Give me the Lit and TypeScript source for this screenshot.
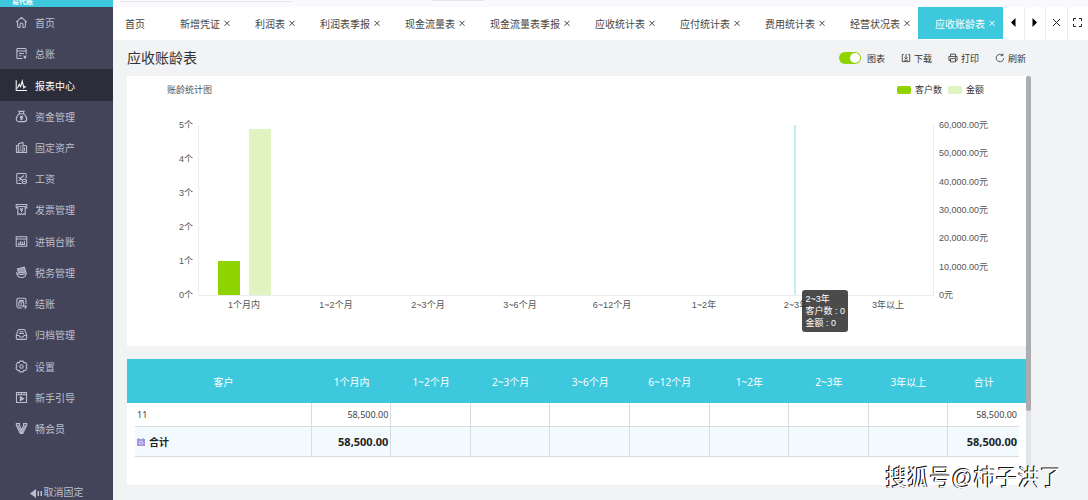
import { LitElement, html, css, svg, nothing } from "lit";
import { customElement } from "lit/decorators.js";
import { classMap } from "lit/directives/class-map.js";

const icons: Record<string, unknown> = {
  home: svg`<path d="M1.5 7.6 8 1.8l6.500 5.800M3.200 6.300v6.300c0 1 .6 1.600 1.600 1.600h1.400V10.300a1.800 1.800 0 0 1 3.600 0v3.900h1.400c1 0 1.600-.6 1.600-1.600V6.300"/>`,
  ledger: svg`<path d="M9 14.200H3.600c-.8 0-1.300-.5-1.300-1.300V3.100c0-.8.5-1.300 1.300-1.300h8.800c.8 0 1.300.5 1.300 1.300V9M2.300 5h11.400M5 8h6M5 10.700h3"/><path d="m10.500 10.500 1.700 2 1.700-2M12.200 12.500v2.300M10.700 12.800h3"/>`,
  report: svg`<path d="M1.500 1.500v12.700h13.200M3 11.500l2.200-5 1.700 3 2-7 2 8.500 1.300-2 1 1.300"/>`,
  money: svg`<path d="M5.800 4.300 4.800 1.700h6.400l-1 2.600M5.600 4.500h4.800c2.600 1.800 4 4 4 6.500 0 2.200-1.200 3.300-3.200 3.300H4.800c-2 0-3.200-1.100-3.200-3.300 0-2.500 1.400-4.700 4-6.500z"/><path d="m6.200 7 1.800 2 1.800-2M8 9v3.500M6 9.300h4M6 11h4"/>`,
  asset: svg`<path d="M4.500 14V3.300L9.800 1.700V14M4.500 4.800l-2.800 1V14h12.600V6.300L9.800 5M6.300 6.200h1.700M6.300 8.700h1.700M6.300 11.200h1.700M11.700 8.200v3.800M3 8.500h.5M3 11h.5"/>`,
  salary: svg`<path d="M8 14.200H3.500c-.8 0-1.300-.5-1.300-1.300V3.100c0-.8.5-1.300 1.300-1.300h9c.8 0 1.300.5 1.300 1.300v5M4.500 6.500l2 1.500L11 4.300M4.500 10.500l3-1.500 1.500.7"/><circle cx="11.500" cy="11.700" r="2.700"/><path d="M10.300 11.700h2.400"/>`,
  invoice: svg`<path d="M3.500 6H1.500V1.900h13V6h-2M3.500 4.300h9v9.900l-1.600-1.200-1.400 1.200L8 13l-1.500 1.200L5.100 13l-1.600 1.200z"/><path d="m6.200 6.300 1.800 2 1.800-2M8 8.300v3M6.300 8.700h3.400"/>`,
  stock: svg`<path d="M1.500 2.200h13v11.600h-13zM1.500 4.900h13M4.700 11.600V9M7 11.600V7.300M9.200 11.600V8.500M11.500 11.600V7M3.500 11.700h9"/>`,
  tax: svg`<path d="M2 8.600c.6 3.600 2.800 5.600 6 5.600s5.500-2 6-5.600c-2 1.200-3.500 1.700-5 1.700H6.500C4.800 10.200 3.300 9.600 2 8.600z"/><path d="M4.200 7.800 3 3.500l8.500-2 1.700 5.700c-2 1-5 1.500-9 .6z" fill="currentColor" fill-opacity=".7"/>`,
  closing: svg`<path d="M8.500 13.500H4.300c-1.200 0-2-.7-2-2V3.500c0-1.200.8-1.900 2-1.900h7.200c1.200 0 2 .7 2 1.900V9M5 4.300h6"/><rect x="4.700" y="6" width="6" height="5" rx="1"/><path d="M7.700 7.500v2M14 12h-4.500M12 10l2 2-2 2.500"/>`,
  archive: svg`<path d="M1.600 9 3.700 3c.3-.8.700-1.100 1.500-1.100h5.600c.8 0 1.200.3 1.500 1.100l2.100 6v3.500c0 1-.5 1.500-1.500 1.500H3.100c-1 0-1.500-.5-1.500-1.500zM1.600 9.200h3.300l1.200 1.900h3.800l1.200-1.900h3.300M5.500 4.600h5M4.900 6.800h6.200"/>`,
  gear: svg`<path d="M5.300 3.200 6.100 1.400h3.800l.8 1.800 2.200-.2 1.900 3.200L13.500 8l1.300 1.800-1.900 3.200-2.200-.2-.8 1.800H6.100l-.8-1.800-2.200.2-1.900-3.200L2.500 8 1.200 6.200 3.100 3z"/><circle cx="8" cy="8" r="2.100"/>`,
  guide: svg`<path d="M1.800 1.900h12.400v12.200H1.800zM1.800 4.700h12.400M4.800 1.900v2.800M8 1.900v2.800M11.200 1.900v2.800"/><path d="M6.600 7v4.800l4-2.400z" fill="currentColor"/>`,
  member: svg`<path d="M1.600 2h4v2.200l2.500 6 2.400-6V2h4v2L9.600 14H6.400L1.600 4zM3.200 3.800l4.500 9.500M12.900 3.800 8.300 13.300"/>`,
  download: svg`<path d="M4.500 2.500H2v11.300h12V2.500h-2.500M8 1.500v7.800M5.500 7 8 9.500 10.500 7M5 11.600h6"/>`,
  print: svg`<path d="M4 5.500V1.800h8v3.700M4 11.800H1.500V5.500h13v6.300H12M4 9h8v5.200H4zM11 7.300h1.500"/>`,
  refresh: svg`<path d="M14 8.300a6 6 0 1 1-2-4.800M12.500 1v3.200H9.300"/>`,
};

const icon = (name: string) => html`
  <svg class="icon" viewBox="0 0 16 16" fill="none" stroke="currentColor" stroke-width="1.300" aria-hidden="true">${icons[name]}</svg>`;

const cross = html`
  <svg class="cross" viewBox="0 0 8 8" fill="none" stroke="currentColor" aria-hidden="true"><path d="m1.500 1.800 5 5M6.500 1.800l-5 5"/></svg>`;

const menu: [string, string][] = [
  ["home", "首页"], ["ledger", "总账"], ["report", "报表中心"], ["money", "资金管理"],
  ["asset", "固定资产"], ["salary", "工资"], ["invoice", "发票管理"], ["stock", "进销台账"],
  ["tax", "税务管理"], ["closing", "结账"], ["archive", "归档管理"], ["gear", "设置"],
  ["guide", "新手引导"], ["member", "畅会员"],
];

const tabs = ["首页", "新增凭证", "利润表", "利润表季报", "现金流量表", "现金流量表季报",
  "应收统计表", "应付统计表", "费用统计表", "经营状况表", "应收账龄表"];

const periods = ["1个月内", "1~2个月", "2~3个月", "3~6个月", "6~12个月", "1~2年", "2~3年", "3年以上"];
const customers = [1, 0, 0, 0, 0, 0, 0, 0];
const amounts = [58500, 0, 0, 0, 0, 0, 0, 0];
const countTicks = [5, 4, 3, 2, 1, 0];
const amountTicks = ["60,000.00元", "50,000.00元", "40,000.00元", "30,000.00元", "20,000.00元", "10,000.00元", "0元"];

@customElement("side-menu")
export class SideMenu extends LitElement {
  static styles = css`
    :host { display: flex; flex-direction: column; background: #43445a; color: #bcc0ce; font-size: 10px; }
    .brand { height: 7px; overflow: hidden; background: #3dc8dd; color: #fff; font-size: 7px; font-weight: 700; line-height: 4px; padding-left: 12px; }
    .list { flex: 1; display: flex; flex-direction: column; }
    .item { flex: 1; display: flex; align-items: center; gap: 7px; padding-left: 15px; color: inherit; text-decoration: none; }
    .item.active { background: #2c2d3a; color: #fff; }
    .icon { width: 13px; height: 13px; flex: none; }
    .foot { height: 56px; display: flex; align-items: flex-end; justify-content: center; }
    .unpin { display: flex; align-items: center; gap: 1px; border: 0; padding: 0; background: none; color: inherit; font: inherit; line-height: 14px; }
    .arrow { width: 13px; height: 9px; }
  `;
  render() {
    return html`
      <div class="brand">易代账</div>
      <nav class="list">
        ${menu.map(([name, label]) => html`
          <a class=${classMap({ item: true, active: name === "report" })} href="#${name}">${icon(name)}<span>${label}</span></a>`)}
      </nav>
      <div class="foot">
        <button class="unpin">
          <svg class="arrow" viewBox="0 0 13 9" fill="currentColor" aria-hidden="true"><path d="M0 4.500 6 0v9zM7.500 2H9v5H7.500zM10.500 2H12v5h-1.500z"/></svg>取消固定
        </button>
      </div>`;
  }
}

@customElement("tab-bar")
export class TabBar extends LitElement {
  static styles = css`
    :host { display: flex; height: 33px; background: #fff; font-size: 10px; color: #444; }
    .tab { display: flex; align-items: center; gap: 3px; height: 32px; padding: 0 7px 0 17px; white-space: nowrap; }
    .tab.first { padding: 0 18px 0 12px; }
    .tab.active { background: #3dc8dd; color: #fff; }
    .link { color: inherit; text-decoration: none; }
    .close { display: flex; border: 0; padding: 0; background: none; color: inherit; }
    .cross { width: 8px; height: 8px; }
    .controls { flex: 1; display: flex; }
    .control { flex: 1; display: flex; align-items: center; justify-content: center; border: 0; border-right: 1px solid #ececf0; padding: 0 0 2px; background: none; color: #222; }
    .control:last-child { border-right: 0; }
    .glyph { width: 11px; height: 11px; flex: none; }
  `;
  render() {
    const last = tabs.length - 1;
    return html`
      ${tabs.map((label, i) => html`
        <div class=${classMap({ tab: true, first: i === 0, active: i === last })}>
          <a class="link" href="#tab-${i}">${label}</a>
          ${i ? html`<button class="close" aria-label="关闭">${cross}</button>` : nothing}
        </div>`)}
      <div class="controls">
        <button class="control" aria-label="向左"><svg class="glyph" viewBox="0 0 11 11"><path d="M7.500 1v9L3 5.500z"/></svg></button>
        <button class="control" aria-label="向右"><svg class="glyph" viewBox="0 0 11 11"><path d="M3.500 1v9L8 5.500z"/></svg></button>
        <button class="control" aria-label="关闭全部"><svg class="glyph" viewBox="0 0 11 11" fill="none" stroke="currentColor"><path d="m2 2 7 7M9 2 2 9"/></svg></button>
        <button class="control" aria-label="全屏"><svg class="glyph" viewBox="0 0 11 11" fill="none" stroke="currentColor"><path d="M1.500 4V1.500H4M7 1.500h2.500V4M9.500 7v2.500H7M4 9.500H1.500V7"/></svg></button>
      </div>`;
  }
}

@customElement("aging-chart")
export class AgingChart extends LitElement {
  static styles = css`
    :host { display: block; padding: 8px 0 35px; background: #fff; color: #555; font-size: 9px; line-height: 12px; }
    .head { display: flex; justify-content: space-between; padding: 0 42px 0 40px; }
    .legend { display: flex; gap: 6px; }
    .key { display: flex; align-items: center; gap: 4px; color: #333; }
    .swatch { width: 14px; height: 8px; border-radius: 2px; background: #8fd400; }
    .swatch.pale { background: #e1f3c1; }
    .grid { display: grid; grid-template-columns: 71px 1fr 92px; margin-top: 23px; }
    .axis { display: flex; flex-direction: column; justify-content: space-between; height: 182px; }
    .axis.left { padding-right: 5px; text-align: right; }
    .axis.right { padding-left: 5px; }
    .plot { position: relative; display: grid; grid-template-columns: repeat(8, 1fr); height: 171px; margin: 6px 0 5px; border: 1px solid #ececec; border-top: 0; box-sizing: border-box; }
    .slot { display: flex; align-items: flex-end; justify-content: center; gap: 9px; }
    .bar { width: 22px; background: #8fd400; }
    .bar.pale { background: #e1f3c1; }
    .pointer { width: 2px; height: 100%; background: #c3edf2; }
    .periods { grid-column: 2; display: grid; grid-template-columns: repeat(8, 1fr); margin-top: -2px; text-align: center; }
    .tip { position: absolute; left: calc(81.250% + 7px); top: 165px; padding: 3px; border-radius: 3px; background: rgba(50, 50, 50, .88); color: #fff; white-space: nowrap; }
  `;
  render() {
    return html`
      <div class="head">
        <span>账龄统计图</span>
        <div class="legend">
          <span class="key"><i class="swatch"></i>客户数</span>
          <span class="key"><i class="swatch pale"></i>金额</span>
        </div>
      </div>
      <div class="grid">
        <div class="axis left">${countTicks.map((n) => html`<span>${n}个</span>`)}</div>
        <div class="plot">
          ${periods.map((_, i) => html`
            <div class="slot">
              ${customers[i] ? html`<div class="bar" style="height:${(customers[i] / 5) * 100}%"></div>` : nothing}
              ${amounts[i] ? html`<div class="bar pale" style="height:${(amounts[i] / 60000) * 100}%"></div>` : nothing}
              ${i === 6 ? html`<div class="pointer"></div>` : nothing}
            </div>`)}
          <div class="tip">2~3年<br>客户数 : 0<br>金额 : 0</div>
        </div>
        <div class="axis right">${amountTicks.map((t) => html`<span>${t}</span>`)}</div>
        <div class="periods">${periods.map((p) => html`<span>${p}</span>`)}</div>
      </div>`;
  }
}

@customElement("aging-table")
export class AgingTable extends LitElement {
  static styles = css`
    :host { display: block; padding: 0 7px 0 8px; background: #fff; color: #444; font-family: "Noto Sans", "Noto Sans CJK SC", sans-serif; }
    .table { width: 100%; table-layout: fixed; border-collapse: separate; border-spacing: 0; font-size: 9px; }
    .customer { width: 20%; }
    .total { width: 8%; }
    .th { height: 44px; padding: 0; background: #3dc8dd; color: #fff; font-size: 10px; font-weight: 400; }
    .th:first-child { box-shadow: -8px 0 0 #3dc8dd; }
    .th:last-child { box-shadow: 7px 0 0 #3dc8dd; }
    .td { height: 24px; box-sizing: border-box; padding: 0 2px; border-right: 1px solid #d9dcde; border-bottom: 1px solid #d9dcde; text-align: right; line-height: 14px; }
    .td:first-child { text-align: left; }
    .td:last-child { border-right: 0; }
    .sum .td { height: 30px; background: #f2fafd; color: #222; font-size: 11px; font-weight: 700; }
    .label { display: flex; align-items: center; gap: 4px; font-size: 10px; }
    .badge { width: 8px; height: 8px; }
  `;
  render() {
    return html`
      <table class="table">
        <thead><tr>
          <th class="th customer">客户</th>
          ${periods.map((p) => html`<th class="th">${p}</th>`)}
          <th class="th total">合计</th>
        </tr></thead>
        <tbody>
          <tr><td class="td">11</td>${this.cells()}</tr>
          <tr class="sum">
            <td class="td"><span class="label"><svg class="badge" viewBox="0 0 8 8" aria-hidden="true"><path d="M0 1h8v7H0zM1 0h1v1H1zM6 0h1v1H6z" fill="#a594e0"/><path d="M2.500 3.500h3V6h-3z" stroke="#e6e0fa" stroke-width=".7" fill="none"/></svg>合计</span></td>
            ${this.cells()}
          </tr>
        </tbody>
      </table>`;
  }
  private cells() {
    return html`${amounts.map((a) => html`<td class="td">${a ? "58,500.00" : nothing}</td>`)}<td class="td">58,500.00</td>`;
  }
}

@customElement("app-root")
export class AppRoot extends LitElement {
  static styles = css`
    :host { display: grid; grid-template-columns: 113px minmax(0, 1fr); height: 100vh; overflow: hidden; position: relative; background: #f2f3f5; font-family: "Liberation Sans", "Noto Sans CJK SC", sans-serif; color: #333; }
    .main { display: flex; flex-direction: column; min-width: 0; }
    .strip { height: 7px; display: flex; gap: 140px; padding-left: 7px; background: #faf9fd; }
    .edge { width: 172px; height: 1px; border-bottom: 1px solid #e6e5ec; }
    .edge.short { width: 52px; height: 0; }
    .page { flex: 1; display: flex; flex-direction: column; min-height: 0; padding: 0 57px 15px 14px; }
    .bar { display: flex; align-items: center; height: 36px; padding-right: 5px; gap: 16px; font-size: 9px; }
    .title { flex: 1; margin: 0; font-size: 14px; line-height: 20px; font-weight: 400; }
    .switch { display: flex; align-items: center; gap: 6px; }
    .toggle { appearance: none; display: flex; justify-content: flex-end; box-sizing: border-box; width: 22px; height: 12px; margin: 0; padding: 1px; border-radius: 6px; background: #8fd400; }
    .toggle::before { content: ""; width: 10px; height: 10px; border-radius: 50%; background: #fff; }
    .toggle:not(:checked) { justify-content: flex-start; background: #bbb; }
    .action { display: flex; align-items: center; gap: 3px; border: 0; padding: 0; background: none; color: inherit; font: inherit; }
    .icon { width: 10px; height: 10px; }
    .scroll { flex: 1; display: flex; min-height: 0; }
    .content { flex: 1; display: flex; flex-direction: column; gap: 13px; min-width: 0; }
    .fill { flex: 1; }
    .track { width: 5px; background: #e4e5e8; }
    .thumb { height: 82%; border-radius: 3px; background: #acadb0; }
    .mark { position: absolute; right: 26px; bottom: 7px; color: #fff; font-size: 22px; line-height: 30px; text-shadow: -1px -1px 0 #111, -1px 0 0 #111; }
  `;
  render() {
    return html`
      <side-menu></side-menu>
      <div class="main">
        <div class="strip"><div class="edge"></div><div class="edge short"></div></div>
        <tab-bar></tab-bar>
        <main class="page">
          <header class="bar">
            <h1 class="title">应收账龄表</h1>
            <label class="switch"><input class="toggle" type="checkbox" checked>图表</label>
            <button class="action">${icon("download")}下载</button>
            <button class="action">${icon("print")}打印</button>
            <button class="action">${icon("refresh")}刷新</button>
          </header>
          <div class="scroll">
            <div class="content">
              <aging-chart></aging-chart>
              <aging-table class="fill"></aging-table>
            </div>
            <div class="track"><div class="thumb"></div></div>
          </div>
        </main>
      </div>
      <div class="mark">搜狐号@柿子洪了</div>`;
  }
}
